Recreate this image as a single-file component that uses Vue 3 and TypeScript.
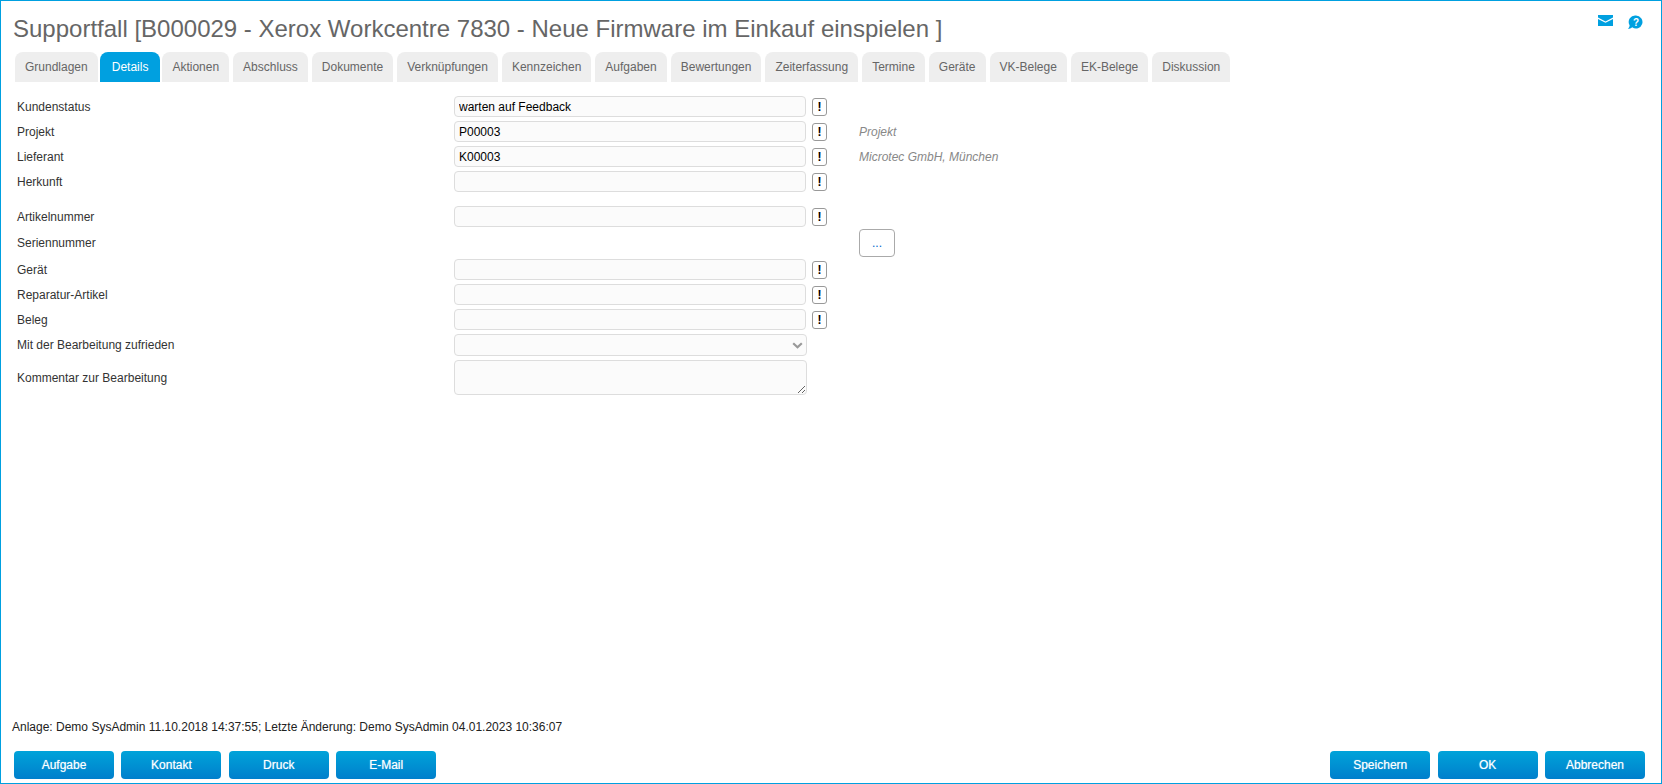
<script setup lang="ts">
interface Row {
  label: string
  value: string
  hint?: string
}

const tabs: string[] = ['Grundlagen', 'Details', 'Aktionen', 'Abschluss', 'Dokumente', 'Verknüpfungen', 'Kennzeichen', 'Aufgaben', 'Bewertungen', 'Zeiterfassung', 'Termine', 'Geräte', 'VK-Belege', 'EK-Belege', 'Diskussion']
const topRows: Row[] = [
  { label: 'Kundenstatus', value: 'warten auf Feedback' },
  { label: 'Projekt', value: 'P00003', hint: 'Projekt' },
  { label: 'Lieferant', value: 'K00003', hint: 'Microtec GmbH, München' },
  { label: 'Herkunft', value: '' },
]
const lowerRows: Row[] = [
  { label: 'Gerät', value: '' },
  { label: 'Reparatur-Artikel', value: '' },
  { label: 'Beleg', value: '' },
]
const leftButtons: string[] = ['Aufgabe', 'Kontakt', 'Druck', 'E-Mail']
const rightButtons: string[] = ['Speichern', 'OK', 'Abbrechen']
</script>

<template>
  <div class="frame">
    <header class="head">
      <h1 class="title">Supportfall [B000029 - Xerox Workcentre 7830 - Neue Firmware im Einkauf einspielen ]</h1>
      <div class="head-icons">
        <svg class="ic-mail" width="15" height="11" viewBox="0 0 15 11">
          <path d="M0 0H15V2.6L7.5 6.4L0 2.6Z" fill="#00a0e0" />
          <path d="M0 4L7.5 7.8L15 4V11H0Z" fill="#00a0e0" />
        </svg>
        <svg class="ic-help" width="16" height="15" viewBox="0 0 16 15">
          <path d="M9 0.5A6.5 6.5 0 1 1 5.2 12.3C4 13.4 2.5 14 0.8 14C1.9 13 2.5 11.8 2.6 10.2A6.5 6.5 0 0 1 9 0.5Z" fill="#00a0e0" />
          <text x="9" y="10.6" text-anchor="middle" class="ic-q">?</text>
        </svg>
      </div>
    </header>

    <nav class="tabs">
      <span v-for="t in tabs" :key="t" class="tab" :class="{ active: t === 'Details' }">{{ t }}</span>
    </nav>

    <form class="form" @submit.prevent>
      <div v-for="r in topRows" :key="r.label" class="row">
        <label class="lbl">{{ r.label }}</label>
        <input class="field" type="text" readonly :value="r.value" />
        <button type="button" class="bang">!</button>
        <span v-if="r.hint" class="hint">{{ r.hint }}</span>
      </div>

      <div class="row spaced">
        <label class="lbl">Artikelnummer</label>
        <input class="field" type="text" readonly value="" />
        <button type="button" class="bang">!</button>
      </div>

      <div class="serial">
        <label class="lbl">Seriennummer</label>
        <button type="button" class="dots">...</button>
      </div>

      <div v-for="r in lowerRows" :key="r.label" class="row">
        <label class="lbl">{{ r.label }}</label>
        <input class="field" type="text" readonly :value="r.value" />
        <button type="button" class="bang">!</button>
      </div>

      <div class="row select-row">
        <label class="lbl">Mit der Bearbeitung zufrieden</label>
        <div class="select-box">
          <svg width="11" height="7" viewBox="0 0 11 7"><path d="M1.2 1.2L5.5 5.2L9.8 1.2" fill="none" stroke="#999" stroke-width="2.2" /></svg>
        </div>
      </div>

      <div class="row area-row">
        <label class="lbl">Kommentar zur Bearbeitung</label>
        <textarea class="area" readonly></textarea>
      </div>
    </form>

    <p class="meta">Anlage: Demo SysAdmin 11.10.2018 14:37:55; Letzte Änderung: Demo SysAdmin 04.01.2023 10:36:07</p>

    <footer class="foot">
      <div class="btns">
        <button v-for="b in leftButtons" :key="b" type="button" class="btn">{{ b }}</button>
      </div>
      <div class="btns">
        <button v-for="b in rightButtons" :key="b" type="button" class="btn">{{ b }}</button>
      </div>
    </footer>
  </div>
</template>

<style>
html, body { margin: 0; background: #fff; }
</style>

<style scoped>
.frame {
  box-sizing: border-box;
  width: 1662px;
  height: 784px;
  border: 1px solid #00a0e0;
  display: flex;
  flex-direction: column;
  font-family: "Liberation Sans", Arial, sans-serif;
  font-size: 12px;
  color: #333;
  background: #fff;
  overflow: hidden;
}
.head {
  display: flex;
  justify-content: space-between;
  height: 51px;
  padding: 0 18px 0 12px;
}
.title {
  margin: 14px 0 0;
  font-size: 24px;
  line-height: 28px;
  font-weight: 400;
  color: #666;
  white-space: nowrap;
}
.head-icons { display: flex; gap: 14px; padding-top: 14px; align-items: flex-start; }
.ic-q { font: 700 10px "Liberation Sans", sans-serif; fill: #fff; }
.tabs { display: flex; gap: 4px; padding-left: 14px; height: 30px; }
.tab {
  display: flex;
  align-items: center;
  padding: 0 10px;
  background: #eee;
  color: #666;
  border-radius: 8px 8px 0 0;
}
.tab.active {
  background: #00a0e0;
  color: #fff;
  padding: 0 11.5px;
  margin: 0 -1.5px;
}
.form { display: flex; flex-direction: column; padding: 14px 0 0 16px; gap: 4px; }
.row { display: flex; align-items: center; height: 21px; }
.row.spaced { margin-top: 10px; }
.lbl { width: 437px; flex: none; color: #333; }
.field, .select-box, .area {
  box-sizing: border-box;
  width: 352px;
  height: 21px;
  flex: none;
  border: 1px solid #ddd;
  border-radius: 4px;
  background: #fbfbfb;
  font: 12px "Liberation Sans", Arial, sans-serif;
  color: #000;
  padding: 0 4px;
  margin: 0;
  outline: none;
}
.bang {
  box-sizing: border-box;
  width: 15px;
  height: 18px;
  margin: 0 0 0 6px;
  padding: 0;
  border: 1px solid #999;
  border-radius: 3px;
  background: #fff;
  font: 700 12px "Liberation Sans", Arial, sans-serif;
  color: #000;
}
.hint { margin-left: 32px; font-style: italic; color: #888; }
.serial { display: flex; align-items: center; height: 28px; margin: -2px 0 -2px; }
.dots {
  box-sizing: border-box;
  width: 36px;
  height: 28px;
  margin-left: 405px;
  padding: 0;
  border: 1px solid #aaa;
  border-radius: 4px;
  background: #fff;
  font: 12px "Liberation Sans", Arial, sans-serif;
  color: #06c;
}
.select-row { height: 22px; }
.select-box {
  width: 353px;
  height: 22px;
  display: flex;
  align-items: center;
  justify-content: flex-end;
  padding-right: 3px;
}
.area-row { height: 35px; }
.area { width: 353px; height: 35px; }
.meta { margin: auto 0 0; padding-left: 11px; line-height: 14px; color: #222; }
.foot {
  display: flex;
  justify-content: space-between;
  padding: 17px 16px 4px 13px;
}
.btns { display: flex; gap: 7.4px; }
.btn {
  box-sizing: border-box;
  width: 100px;
  height: 28px;
  padding: 0;
  border: 0;
  border-radius: 4px;
  background: linear-gradient(#00a3d9, #007fcc);
  color: #fff;
  font: 400 12px "Liberation Sans", Arial, sans-serif;
  text-shadow: 0 0 1px rgba(255, 255, 255, 0.6);
}
</style>
